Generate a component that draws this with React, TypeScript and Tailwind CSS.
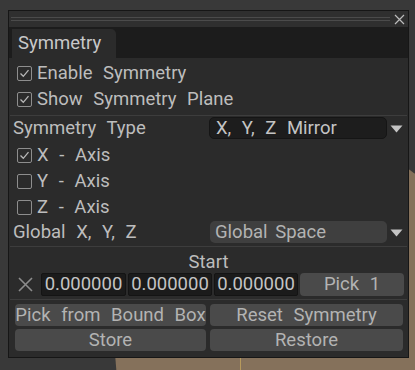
import React from 'react';

const font = { fontFamily: 'Roboto, "Liberation Sans", sans-serif' };

const CheckBox = ({ checked }: { checked: boolean }) => (
  <span className="w-[15px] h-[15px] border border-[#8e8e8e] rounded-[2px] flex items-center justify-center shrink-0">
    {checked && (
      <svg width="11" height="11" viewBox="0 0 11 11">
        <path d="M1.5 5.5 L4.3 8.3 L9.5 2.2" fill="none" stroke="#b8b8b8" strokeWidth="1.3" />
      </svg>
    )}
  </span>
);

const CheckRow = ({ label, checked }: { label: string; checked: boolean }) => (
  <div className="h-[26px] flex items-center gap-[5px] pl-[8px]">
    <CheckBox checked={checked} />
    <span className="[word-spacing:6px]">{label}</span>
  </div>
);

const Arrow = () => (
  <svg width="13" height="8" viewBox="0 0 13 8" className="ml-[3px] mt-[1px]">
    <path d="M0.5 0.5 H12.5 L6.5 7.5 Z" fill="#c4c4c4" />
  </svg>
);

const Separator = () => <div className="h-px bg-[#3d3d3d] mx-[1px]" />;

const Button = ({ label, className }: { label: string; className?: string }) => (
  <div
    className={`h-[22px] bg-[#4a4a4a] rounded-[4px] flex items-center justify-center text-[#b3b3b3] [word-spacing:6px] ${className ?? ''}`}
  >
    {label}
  </div>
);

const NumberField = ({ w }: { w: string }) => (
  <div className={`${w} h-[23px] bg-[#1b1b1b] border border-[#141414] rounded-[2px] flex items-center justify-center text-[#c4c4c4]`}>
    0.000000
  </div>
);

export default function App() {
  return (
    <div
      className="relative w-[415px] h-[370px] overflow-hidden bg-[#393939] text-[18.5px] text-[#bdbdbd] leading-none"
      style={font}
    >
      {/* model in the viewport behind the window */}
      <div className="absolute left-[115px] top-[135px] w-[380px] h-[420px] rounded-[50%] bg-[#85715b]" />
      <div className="absolute left-[240px] top-[355px] w-px h-[15px] bg-[#b79a5c]" />

      <div className="relative ml-[8px] mt-[10px] w-[401px] h-[348px] bg-[#2b2b2b] border border-[#161616] flex flex-col">
        {/* title bar */}
        <div className="h-[16px] bg-[#2f2f2f] flex items-center pl-[2px] pr-[3px]">
          <div className="flex-1 flex flex-col gap-[2px]">
            <div className="h-px bg-[#4b4b4b]" />
            <div className="h-px bg-[#4b4b4b]" />
          </div>
          <svg width="11" height="11" viewBox="0 0 11 11" className="ml-[4px]">
            <path d="M1 1 L10 10 M10 1 L1 10" stroke="#bcbcbc" strokeWidth="1.2" />
          </svg>
        </div>

        {/* tab bar */}
        <div className="h-[31px] bg-[#1c1c1c] flex items-end pl-[3px]">
          <div className="h-[29px] w-[104px] bg-[#2b2b2b] rounded-tr-[5px] flex items-center pl-[6px] text-[#c8c8c8]">
            Symmetry
          </div>
        </div>

        <div className="flex flex-col pt-[2px]">
          <CheckRow label="Enable Symmetry" checked />
          <CheckRow label="Show Symmetry Plane" checked />
          <div className="h-[3px]" />
          <Separator />

          <div className="h-[22px] mt-[1px] flex items-center">
            <span className="w-[200px] pl-[4px] [word-spacing:6px]">Symmetry Type</span>
            <div className="w-[178px] h-[22px] bg-[#1d1d1d] border border-[#151515] rounded-[5px] flex items-center pl-[6px] text-[#c4c4c4] [word-spacing:6px]">
              X, Y, Z Mirror
            </div>
            <Arrow />
          </div>

          <div className="h-[3px]" />
          <CheckRow label="X - Axis" checked />
          <CheckRow label="Y - Axis" checked={false} />
          <CheckRow label="Z - Axis" checked={false} />

          <div className="h-[22px] mt-[1px] flex items-center">
            <span className="w-[201px] pl-[4px] [word-spacing:6px]">Global X, Y, Z</span>
            <div className="w-[177px] h-[22px] bg-[#3f3f3f] rounded-[5px] flex items-center pl-[5px] text-[#b3b3b3] [word-spacing:3px]">
              Global Space
            </div>
            <Arrow />
          </div>

          <div className="h-[3px]" />
          <Separator />

          <div className="h-[25px] pt-[5px] flex items-center justify-center">Start</div>

          <div className="h-[23px] mt-[1px] flex items-center gap-[2px]">
            <svg width="15" height="15" viewBox="0 0 15 15" className="ml-[9px] mr-[6px]">
              <path d="M1 1 L14 14 M14 1 L1 14" stroke="#8c8c8c" strokeWidth="1.6" />
            </svg>
            <NumberField w="w-[85px]" />
            <NumberField w="w-[84px]" />
            <NumberField w="w-[84px]" />
            <Button label="Pick 1" className="w-[104px] h-[23px]" />
          </div>

          <div className="h-[3px]" />
          <Separator />

          <div className="flex gap-[4px] pl-[6px] pr-[5px] mt-[4px]">
            <Button label="Pick from Bound Box" className="w-[191px]" />
            <Button label="Reset Symmetry" className="flex-1" />
          </div>
          <div className="flex gap-[4px] pl-[6px] pr-[5px] mt-[3px]">
            <Button label="Store" className="w-[191px]" />
            <Button label="Restore" className="flex-1" />
          </div>
        </div>
      </div>
    </div>
  );
}
